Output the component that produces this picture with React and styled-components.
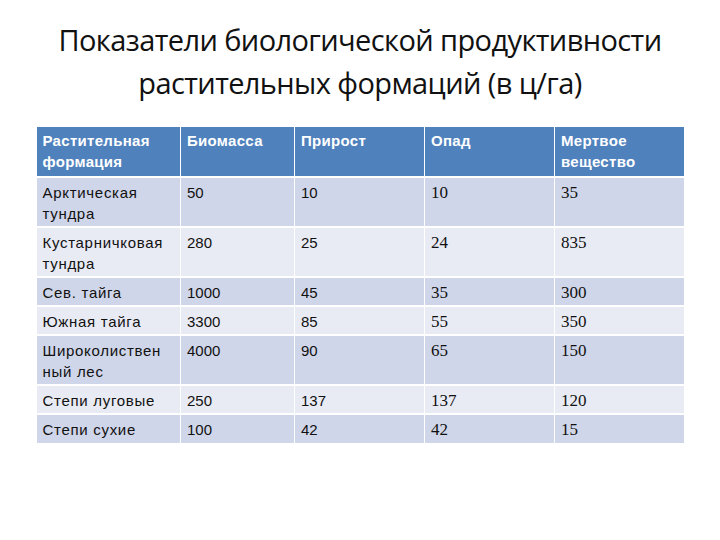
import React from 'react';
import styled, { createGlobalStyle } from 'styled-components';

const GlobalStyle = createGlobalStyle`
  html, body {
    margin: 0;
    padding: 0;
    background: #fff;
  }
  body {
    font-family: 'Liberation Sans', Arial, sans-serif;
  }
`;

const Slide = styled.div`
  width: 720px;
  height: 540px;
  background: #fff;
  display: flex;
  flex-direction: column;
  align-items: center;
  padding-top: 18px;
  box-sizing: border-box;
`;

const Title = styled.h1`
  margin: 0;
  font-family: 'Open Sans', 'Liberation Sans', sans-serif;
  font-weight: 400;
  font-size: 29px;
  line-height: 43px;
  letter-spacing: -0.6px;
  color: #111;
  text-align: center;
`;

const Table = styled.table`
  margin-top: 23px;
  width: 647px;
  border-collapse: collapse;
  table-layout: fixed;
`;

const HeadCell = styled.th`
  background: #4f81bd;
  color: #fff;
  font-family: 'Liberation Sans', Arial, sans-serif;
  font-weight: 700;
  font-size: 15px;
  letter-spacing: 0.3px;
  line-height: 21px;
  text-align: left;
  vertical-align: top;
  padding: 3px 6px 0;
  height: 50px;
  box-sizing: border-box;
  border-left: 1px solid #fff;

  &:first-child {
    border-left: none;
  }
`;

const Row = styled.tr`
  background: ${({ $odd }) => ($odd ? '#d0d6e9' : '#e9ebf4')};
  height: ${({ $tall }) => ($tall ? 50 : 29)}px;
`;

const fonts = {
  label: "'Liberation Sans', Arial, sans-serif",
  sans: "'Liberation Sans', Arial, sans-serif",
  serif: "'Liberation Serif', 'Times New Roman', serif",
};

const Cell = styled.td`
  font-family: ${({ $kind }) => fonts[$kind]};
  font-size: ${({ $kind }) => ($kind === 'serif' ? 17 : 15)}px;
  letter-spacing: ${({ $kind }) => ($kind === 'label' ? 0.7 : 0)}px;
  line-height: 21px;
  color: #111;
  text-align: left;
  vertical-align: top;
  padding: 4px 6px 0;
  box-sizing: border-box;
  border-top: 2px solid #fff;
  border-left: 1px solid #fff;

  &:first-child {
    border-left: none;
  }
`;

const widths = [144, 114, 130, 130, 129];

const head = [
  ['Растительная', 'формация'],
  ['Биомасса'],
  ['Прирост'],
  ['Опад'],
  ['Мертвое', 'вещество'],
];

const rows = [
  [['Арктическая', 'тундра'], '50', '10', '10', '35'],
  [['Кустарничковая', 'тундра'], '280', '25', '24', '835'],
  [['Сев. тайга'], '1000', '45', '35', '300'],
  [['Южная тайга'], '3300', '85', '55', '350'],
  [['Широколиствен', 'ный лес'], '4000', '90', '65', '150'],
  [['Степи луговые'], '250', '137', '137', '120'],
  [['Степи сухие'], '100', '42', '42', '15'],
];

const Lines = ({ lines }) =>
  lines.map((l, i) => (
    <React.Fragment key={i}>
      {i > 0 && <br />}
      {l}
    </React.Fragment>
  ));

export default function App() {
  return (
    <>
      <GlobalStyle />
      <Slide>
        <Title>
          Показатели биологической продуктивности
          <br />
          растительных формаций (в ц/га)
        </Title>
        <Table>
          <colgroup>
            {widths.map((w, i) => (
              <col key={i} style={{ width: w }} />
            ))}
          </colgroup>
          <thead>
            <tr>
              {head.map((h, i) => (
                <HeadCell key={i}>
                  <Lines lines={h} />
                </HeadCell>
              ))}
            </tr>
          </thead>
          <tbody>
            {rows.map((r, i) => (
              <Row key={i} $odd={i % 2 === 0} $tall={r[0].length > 1}>
                <Cell $kind="label">
                  <Lines lines={r[0]} />
                </Cell>
                <Cell $kind="sans">{r[1]}</Cell>
                <Cell $kind="sans">{r[2]}</Cell>
                <Cell $kind="serif">{r[3]}</Cell>
                <Cell $kind="serif">{r[4]}</Cell>
              </Row>
            ))}
          </tbody>
        </Table>
      </Slide>
    </>
  );
}
